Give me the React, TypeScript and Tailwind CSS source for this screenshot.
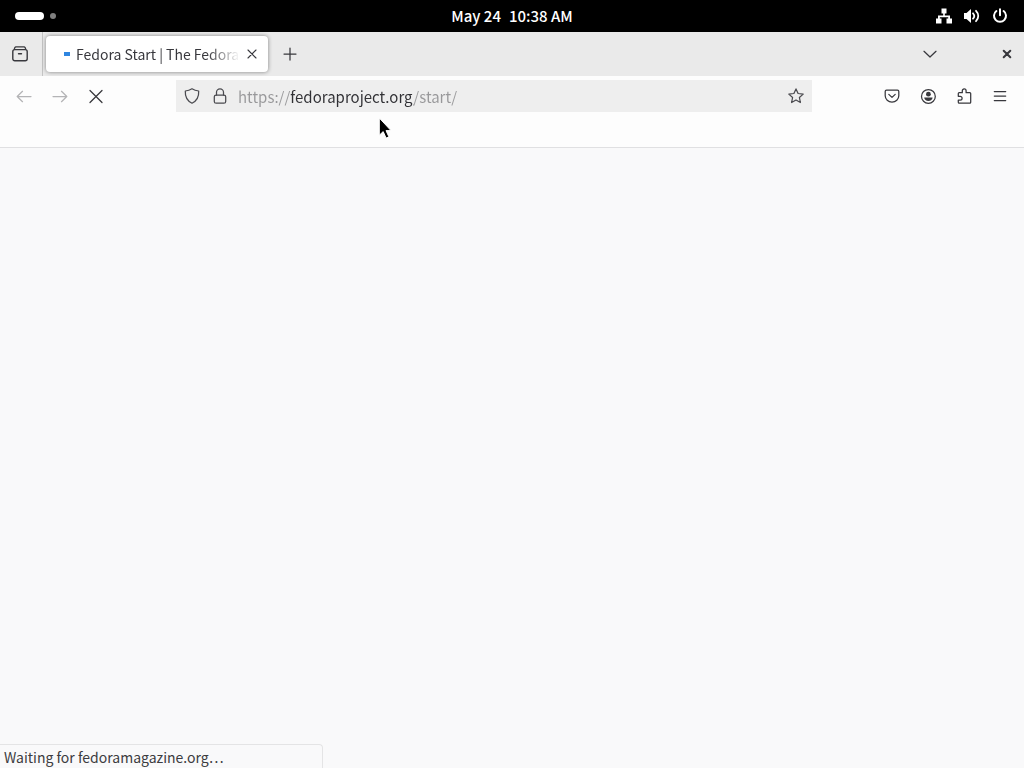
import type { ReactNode } from "react";
import { useState } from "react";

function Icon({ children, className = "size-4" }: { children: ReactNode; className?: string }) {
  return (
    <svg
      viewBox="0 0 16 16"
      className={`shrink-0 ${className}`}
      fill="none"
      stroke="currentColor"
      strokeWidth="1.25"
      strokeLinecap="round"
      strokeLinejoin="round"
      aria-hidden="true"
    >
      {children}
    </svg>
  );
}

function ToolButton({ label, disabled, children }: { label: string; disabled?: boolean; children: ReactNode }) {
  return (
    <button
      type="button"
      aria-label={label}
      disabled={disabled}
      className="flex h-8 w-9 shrink-0 items-center justify-center text-[#38383d] disabled:text-[#b4b4b6]"
    >
      {children}
    </button>
  );
}

function SystemBar() {
  return (
    <header className="grid h-8 shrink-0 grid-cols-3 items-center bg-black text-white">
      <button type="button" aria-label="Activities" className="flex items-center gap-1.5 justify-self-start pl-[15px]">
        <span className="h-2 w-[29px] rounded-full bg-white" />
        <span className="size-1.5 rounded-full bg-[#7f7f7f]" />
      </button>
      <button type="button" className="flex gap-2 justify-self-center whitespace-nowrap text-[15px] leading-5 font-medium">
        <span>May 24</span>
        <span>10:38 AM</span>
      </button>
      <button type="button" aria-label="System menu" className="flex items-center gap-3 justify-self-end pr-4">
        <Icon>
          <path
            d="M5.5 0.5h5v5h-1.7v2h5.200v3H16v5h-5.500v-5h1.700V9.300H3.800v1.200h1.700v5H0v-5h2v-3h5.200v-2H5.500z"
            fill="currentColor"
            stroke="none"
          />
        </Icon>
        <Icon>
          <path d="M0 5h2.500L7 1v14L2.500 11H0z" fill="currentColor" stroke="none" />
          <path d="M9 5.300c1.500 1.600 1.500 3.800 0 5.400" strokeWidth="1.800" />
          <path d="M12 2.800c3 3 3 7.400 0 10.400" strokeWidth="1.800" />
        </Icon>
        <Icon>
          <path d="M4.400 3a6 6 0 1 0 7.200 0M8 1.200v6" strokeWidth="2" />
        </Icon>
      </button>
    </header>
  );
}

function TabStrip() {
  return (
    <div className="flex h-11 shrink-0 items-center bg-[#eaeaea] text-[#38383d]">
      <button
        type="button"
        aria-label="Firefox View"
        className="flex h-full w-[43px] shrink-0 items-center border-r border-[#c4c4c4] pl-3"
      >
        <Icon>
          <path d="M3.600 0.800h8.800M2.300 3.300c.2-1.500.6-2.500 1.700-2.500M13.700 3.300c-.2-1.500-.6-2.500-1.700-2.500" />
          <rect x="0.800" y="3.600" width="14.400" height="11.200" rx="2" strokeWidth="1.400" />
          <path d="M6.500 7.800h3" strokeWidth="1.400" />
        </Icon>
      </button>
      <div
        role="tab"
        aria-selected="true"
        className="ml-[3px] flex h-9 w-[222px] shrink-0 items-center rounded bg-white pr-2 pl-[18px] shadow-[0_0_4px_rgba(0,0,0,0.45)]"
      >
        <span className="mr-1.5 h-1 w-1.5 shrink-0 bg-[#2f86e0]" />
        <span className="min-w-0 flex-1 mask-r-from-80% text-sm leading-5 whitespace-nowrap">
          Fedora Start | The Fedora
        </span>
        <button type="button" aria-label="Close tab" className="flex size-5 shrink-0 items-center justify-end">
          <Icon>
            <path d="M4 4l8 8M12 4l-8 8" strokeWidth="1.100" />
          </Icon>
        </button>
      </div>
      <button type="button" aria-label="New tab" className="ml-1 flex h-9 w-9 items-center justify-center">
        <Icon>
          <path d="M2 8h12M8 2v12" />
        </Icon>
      </button>
      <button type="button" aria-label="List all tabs" className="ml-auto flex h-9 w-9 items-center justify-center">
        <Icon>
          <path d="M2 5.300l6 5.700 6-5.700" />
        </Icon>
      </button>
      <button type="button" aria-label="Close window" className="ml-12 flex h-9 w-7 items-center pl-[3px]">
        <Icon>
          <path d="M4.700 4.700l6.600 6.600M11.300 4.700l-6.600 6.600" strokeWidth="2" />
        </Icon>
      </button>
    </div>
  );
}

function AddressBar() {
  const [url, setUrl] = useState("https://fedoraproject.org/start/");
  return (
    <div className="flex h-8 min-w-0 flex-1 items-center bg-[#eeeeee] px-2 text-[#4a4a4f]">
      <button type="button" aria-label="Tracking protection" className="flex w-7 shrink-0">
        <Icon>
          <path d="M8 0.800c2 1.300 4 2 6.700 2.200.3 5.500-1.500 9.700-6.700 12.200C2.800 12.700 1 8.500 1.300 3 4 2.800 6 2.100 8 .8z" />
        </Icon>
      </button>
      <button type="button" aria-label="Site information" className="flex w-[26px] shrink-0">
        <Icon>
          <rect x="2.300" y="7" width="11.400" height="8.200" rx="1.800" />
          <path d="M4.500 7V4.300a3.500 3.500 0 0 1 7 0V7" />
        </Icon>
      </button>
      <input
        type="text"
        aria-label="Address"
        value={url}
        onChange={(event) => setUrl(event.target.value)}
        className="h-6 min-w-0 flex-1 bg-[linear-gradient(90deg,#98989a_52px,#303034_52px,#303034_176px,#98989a_176px)] bg-clip-text text-[15px] leading-5 text-transparent caret-black outline-none"
      />
      <button type="button" aria-label="Bookmark this page" className="flex shrink-0">
        <Icon>
          <path d="M8 0.900l2.100 4.600 5.100.6-3.800 3.400 1 5L8 12l-4.400 2.500 1-5L.8 6.100l5.100-.6z" />
        </Icon>
      </button>
    </div>
  );
}

function Toolbar() {
  return (
    <div className="shrink-0 border-b border-[#e0e0e2] bg-[#fdfdfd] pb-[31px]">
      <nav aria-label="Navigation" className="flex h-10 items-center px-1.5">
        <ToolButton label="Back" disabled>
          <Icon>
            <path d="M15 8.500H1.200M6.500 3.300L1.200 8.500l5.300 5.200" />
          </Icon>
        </ToolButton>
        <ToolButton label="Forward" disabled>
          <Icon>
            <path d="M1 8.500h13.800M9.500 3.300l5.300 5.200-5.300 5.200" />
          </Icon>
        </ToolButton>
        <ToolButton label="Stop">
          <Icon>
            <path d="M2 2.500l12 12M14 2.500l-12 12" />
          </Icon>
        </ToolButton>
        <div className="w-[62px] shrink-0" />
        <AddressBar />
        <div className="w-[62px] shrink-0" />
        <ToolButton label="Save to Pocket">
          <Icon>
            <path d="M2.500 2.200h11c.8 0 1.300.5 1.300 1.300v4.300a6.800 6.300 0 0 1-13.600 0V3.500c0-.8.5-1.300 1.300-1.300z" />
            <path d="M4.800 6.400L8 9.400l3.200-3" />
          </Icon>
        </ToolButton>
        <ToolButton label="Account">
          <Icon>
            <circle cx="8.400" cy="8.400" r="6.900" />
            <circle cx="8.400" cy="6.200" r="2.400" fill="currentColor" stroke="none" />
            <path d="M4.200 9.500h8.400c-.2 2.200-1.900 3.500-4.200 3.500s-4-1.300-4.200-3.500z" fill="currentColor" stroke="none" />
          </Icon>
        </ToolButton>
        <ToolButton label="Extensions">
          <Icon>
            <path d="M6.300 4.700V2.800a1.900 1.900 0 0 1 3.800 0v1.900h3.700c.5 0 .9.400.9.900v8.700c0 .5-.4.900-.9.900H3.200c-.5 0-.9-.4-.9-.9v-2.200h1.900a1.900 1.900 0 0 0 0-3.800H2.300V5.600c0-.5.4-.9.900-.9z" />
          </Icon>
        </ToolButton>
        <ToolButton label="Application menu">
          <Icon>
            <path d="M2.300 3.500h11.400M2.300 8h11.400M2.300 12.500h11.400" />
          </Icon>
        </ToolButton>
      </nav>
    </div>
  );
}

export default function App() {
  return (
    <div className="relative flex min-h-screen flex-col bg-[#f9f9fa] font-['Noto_Sans_CJK_SC','Noto_Sans',sans-serif]">
      <SystemBar />
      <TabStrip />
      <Toolbar />
      <main className="flex flex-1 flex-col justify-end">
        <p
          role="status"
          className="h-6 w-[323px] rounded-tr-sm border-t border-r border-[#e4e4e5] bg-[#f9f9fa] pl-1 text-sm leading-6 text-[#3c3c40]"
        >
          Waiting for fedoramagazine.org…
        </p>
      </main>
      <svg viewBox="0 0 14 22" className="absolute top-[117px] left-[378px] h-[22px] w-3.5" aria-hidden="true">
        <path
          d="M1.300 1v17.200l3.900-3.600 2.900 6.500 2.800-1.300-2.900-6.200h5z"
          fill="#000"
          stroke="#fff"
          strokeWidth="1"
          strokeLinejoin="round"
        />
      </svg>
    </div>
  );
}
